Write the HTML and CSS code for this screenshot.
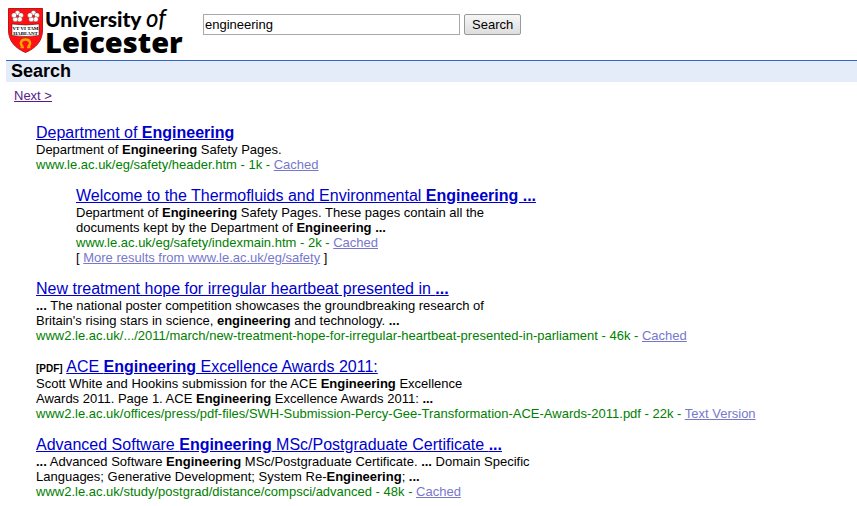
FILE: index.html
```html
<!DOCTYPE html>
<html lang="en">
<head>
<meta charset="utf-8">
<title>University of Leicester Search</title>
<link rel="stylesheet" href="styles.css">
</head>
<body>
<header class="masthead">
  <div class="logo">
    <svg class="crest" viewBox="0 0 35 45" aria-hidden="true">
      <path d="M.5.5h34V22C34.500 33 28 40 17.500 44.500 7 40 .5 33 .5 22Z" fill="#ff1014" stroke="#c01518"/>
      <g fill="#fff" stroke="#5b1416" stroke-width=".4">
        <circle cx="9.500" cy="5" r="2.600"/><circle cx="12.900" cy="7.300" r="2.600"/><circle cx="11.700" cy="11.200" r="2.600"/><circle cx="7.300" cy="11.200" r="2.600"/><circle cx="6.100" cy="7.300" r="2.600"/>
        <circle cx="25.500" cy="5" r="2.600"/><circle cx="28.900" cy="7.300" r="2.600"/><circle cx="27.700" cy="11.200" r="2.600"/><circle cx="23.300" cy="11.200" r="2.600"/><circle cx="22.100" cy="7.300" r="2.600"/>
      </g>
      <circle cx="9.500" cy="8.300" r="1.500" fill="#c33"/><circle cx="25.500" cy="8.300" r="1.500" fill="#c33"/>
      <path d="M4 16Q17.500 18 31 16V27.500Q17.500 29.500 4 27.500Z" fill="#fff" stroke="#311" stroke-width=".5"/>
      <text class="motto" x="17.500" y="21.500" text-anchor="middle">VT VI TAM</text>
      <text class="motto" x="17.500" y="27" text-anchor="middle">HABEANT</text>
      <path d="M15 39C11.500 36 12.500 31.500 17.500 31.500S23.500 36 20 39" fill="none" stroke="#f6a800" stroke-width="2.400"/>
      <path d="M12.500 39.500h3.500M19 39.500h3.500" stroke="#f6a800" stroke-width="1.500"/>
    </svg>
    <div class="wordmark">
      <div class="wordmark-top">University <i>of</i></div>
      <div class="wordmark-main">Leicester</div>
    </div>
  </div>
  <form class="search">
    <input class="query" type="text" name="q" value="engineering" aria-label="Search terms">
    <button class="submit" type="button">Search</button>
  </form>
</header>
<main>
  <h1 class="bar">Search</h1>
  <nav class="pager"><a href="#">Next &gt;</a></nav>
  <div class="results">
    <article>
      <h2><a href="#">Department of <b>Engineering</b></a></h2>
      <p>Department of <b>Engineering</b> Safety Pages.</p>
      <p class="url">www.le.ac.uk/eg/safety/header.htm - 1k - <a href="#">Cached</a></p>
    </article>
    <article class="nested">
      <h2><a href="#">Welcome to the Thermofluids and Environmental <b>Engineering ...</b></a></h2>
      <p>Department of <b>Engineering</b> Safety Pages. These pages contain all the<br>documents kept by the Department of <b>Engineering ...</b></p>
      <p class="url">www.le.ac.uk/eg/safety/indexmain.htm - 2k - <a href="#">Cached</a></p>
      <p class="more">[ <a href="#">More results from www.le.ac.uk/eg/safety</a> ]</p>
    </article>
    <article>
      <h2><a href="#">New treatment hope for irregular heartbeat presented in <b>...</b></a></h2>
      <p><b>...</b> The national poster competition showcases the groundbreaking research of<br>Britain's rising stars in science, <b>engineering</b> and technology. <b>...</b></p>
      <p class="url">www2.le.ac.uk/.../2011/march/new-treatment-hope-for-irregular-heartbeat-presented-in-parliament - 46k - <a href="#">Cached</a></p>
    </article>
    <article>
      <h2><span class="type">[PDF]</span> <a href="#">ACE <b>Engineering</b> Excellence Awards 2011:</a></h2>
      <p>Scott White and Hookins submission for the ACE <b>Engineering</b> Excellence<br>Awards 2011. Page 1. ACE <b>Engineering</b> Excellence Awards 2011: <b>...</b></p>
      <p class="url">www2.le.ac.uk/offices/press/pdf-files/SWH-Submission-Percy-Gee-Transformation-ACE-Awards-2011.pdf - 22k - <a href="#">Text Version</a></p>
    </article>
    <article>
      <h2><a href="#">Advanced Software <b>Engineering</b> MSc/Postgraduate Certificate <b>...</b></a></h2>
      <p><b>...</b> Advanced Software <b>Engineering</b> MSc/Postgraduate Certificate. <b>...</b> Domain Specific<br>Languages; Generative Development; System Re-<b>Engineering</b>; <b>...</b></p>
      <p class="url">www2.le.ac.uk/study/postgrad/distance/compsci/advanced - 48k - <a href="#">Cached</a></p>
    </article>
  </div>
</main>
</body>
</html>
```
FILE: styles.css
```css
body {
  margin: 0 0 0 6px;
  background: #fff;
  color: #000;
  font: 13px/15px "Liberation Sans", Arial, sans-serif;
}

.masthead {
  display: flex;
  align-items: flex-start;
  height: 60px;
}

.logo {
  display: flex;
  flex: none;
  gap: 2px;
  box-sizing: border-box;
  width: 197px;
  padding: 8px 0 0 2px;
}

.crest {
  width: 35px;
  height: 45px;
}

.motto {
  font: bold 5px "Liberation Serif", serif;
}

.wordmark {
  font-family: "Open Sans", sans-serif;
  font-weight: 800;
  white-space: nowrap;
}

.wordmark-top {
  font-family: Lato, sans-serif;
  font-size: 21px;
  font-weight: 900;
  line-height: 19px;
}

.wordmark-top i {
  font-size: 24px;
  font-weight: 500;
}

.wordmark-main {
  font-size: 29px;
  line-height: 28px;
}

.search {
  display: flex;
  gap: 4px;
  padding-top: 14px;
}

.query {
  box-sizing: border-box;
  width: 257px;
  height: 21px;
  padding: 1px;
  border: 1px solid #a9a9a9;
  font: inherit;
}

.submit {
  box-sizing: border-box;
  height: 21px;
  padding: 0 7px;
  border: 1px solid #999;
  border-radius: 2px;
  background: linear-gradient(#f6f6f6, #ddd);
  color: #000;
  font: inherit;
}

.bar {
  margin: 0;
  padding: 0 5px;
  border-top: 1px solid #36c;
  background: #e5ecf9;
  font-size: 18px;
  line-height: 21px;
}

.pager {
  padding: 6px 8px 0;
}

.pager a {
  color: #551a8b;
}

.results {
  display: grid;
  gap: 15px;
  padding: 21px 30px 7px;
}

.nested {
  padding-left: 40px;
}

h2,
p {
  margin: 0;
}

h2 {
  font-size: 16px;
  font-weight: normal;
  line-height: 18px;
}

h2 a {
  color: #0000cc;
}

.type {
  font-size: 10px;
  font-weight: bold;
  line-height: 10px;
}

.url {
  color: #008000;
}

.url a,
.more a {
  color: #7777cc;
}
```
